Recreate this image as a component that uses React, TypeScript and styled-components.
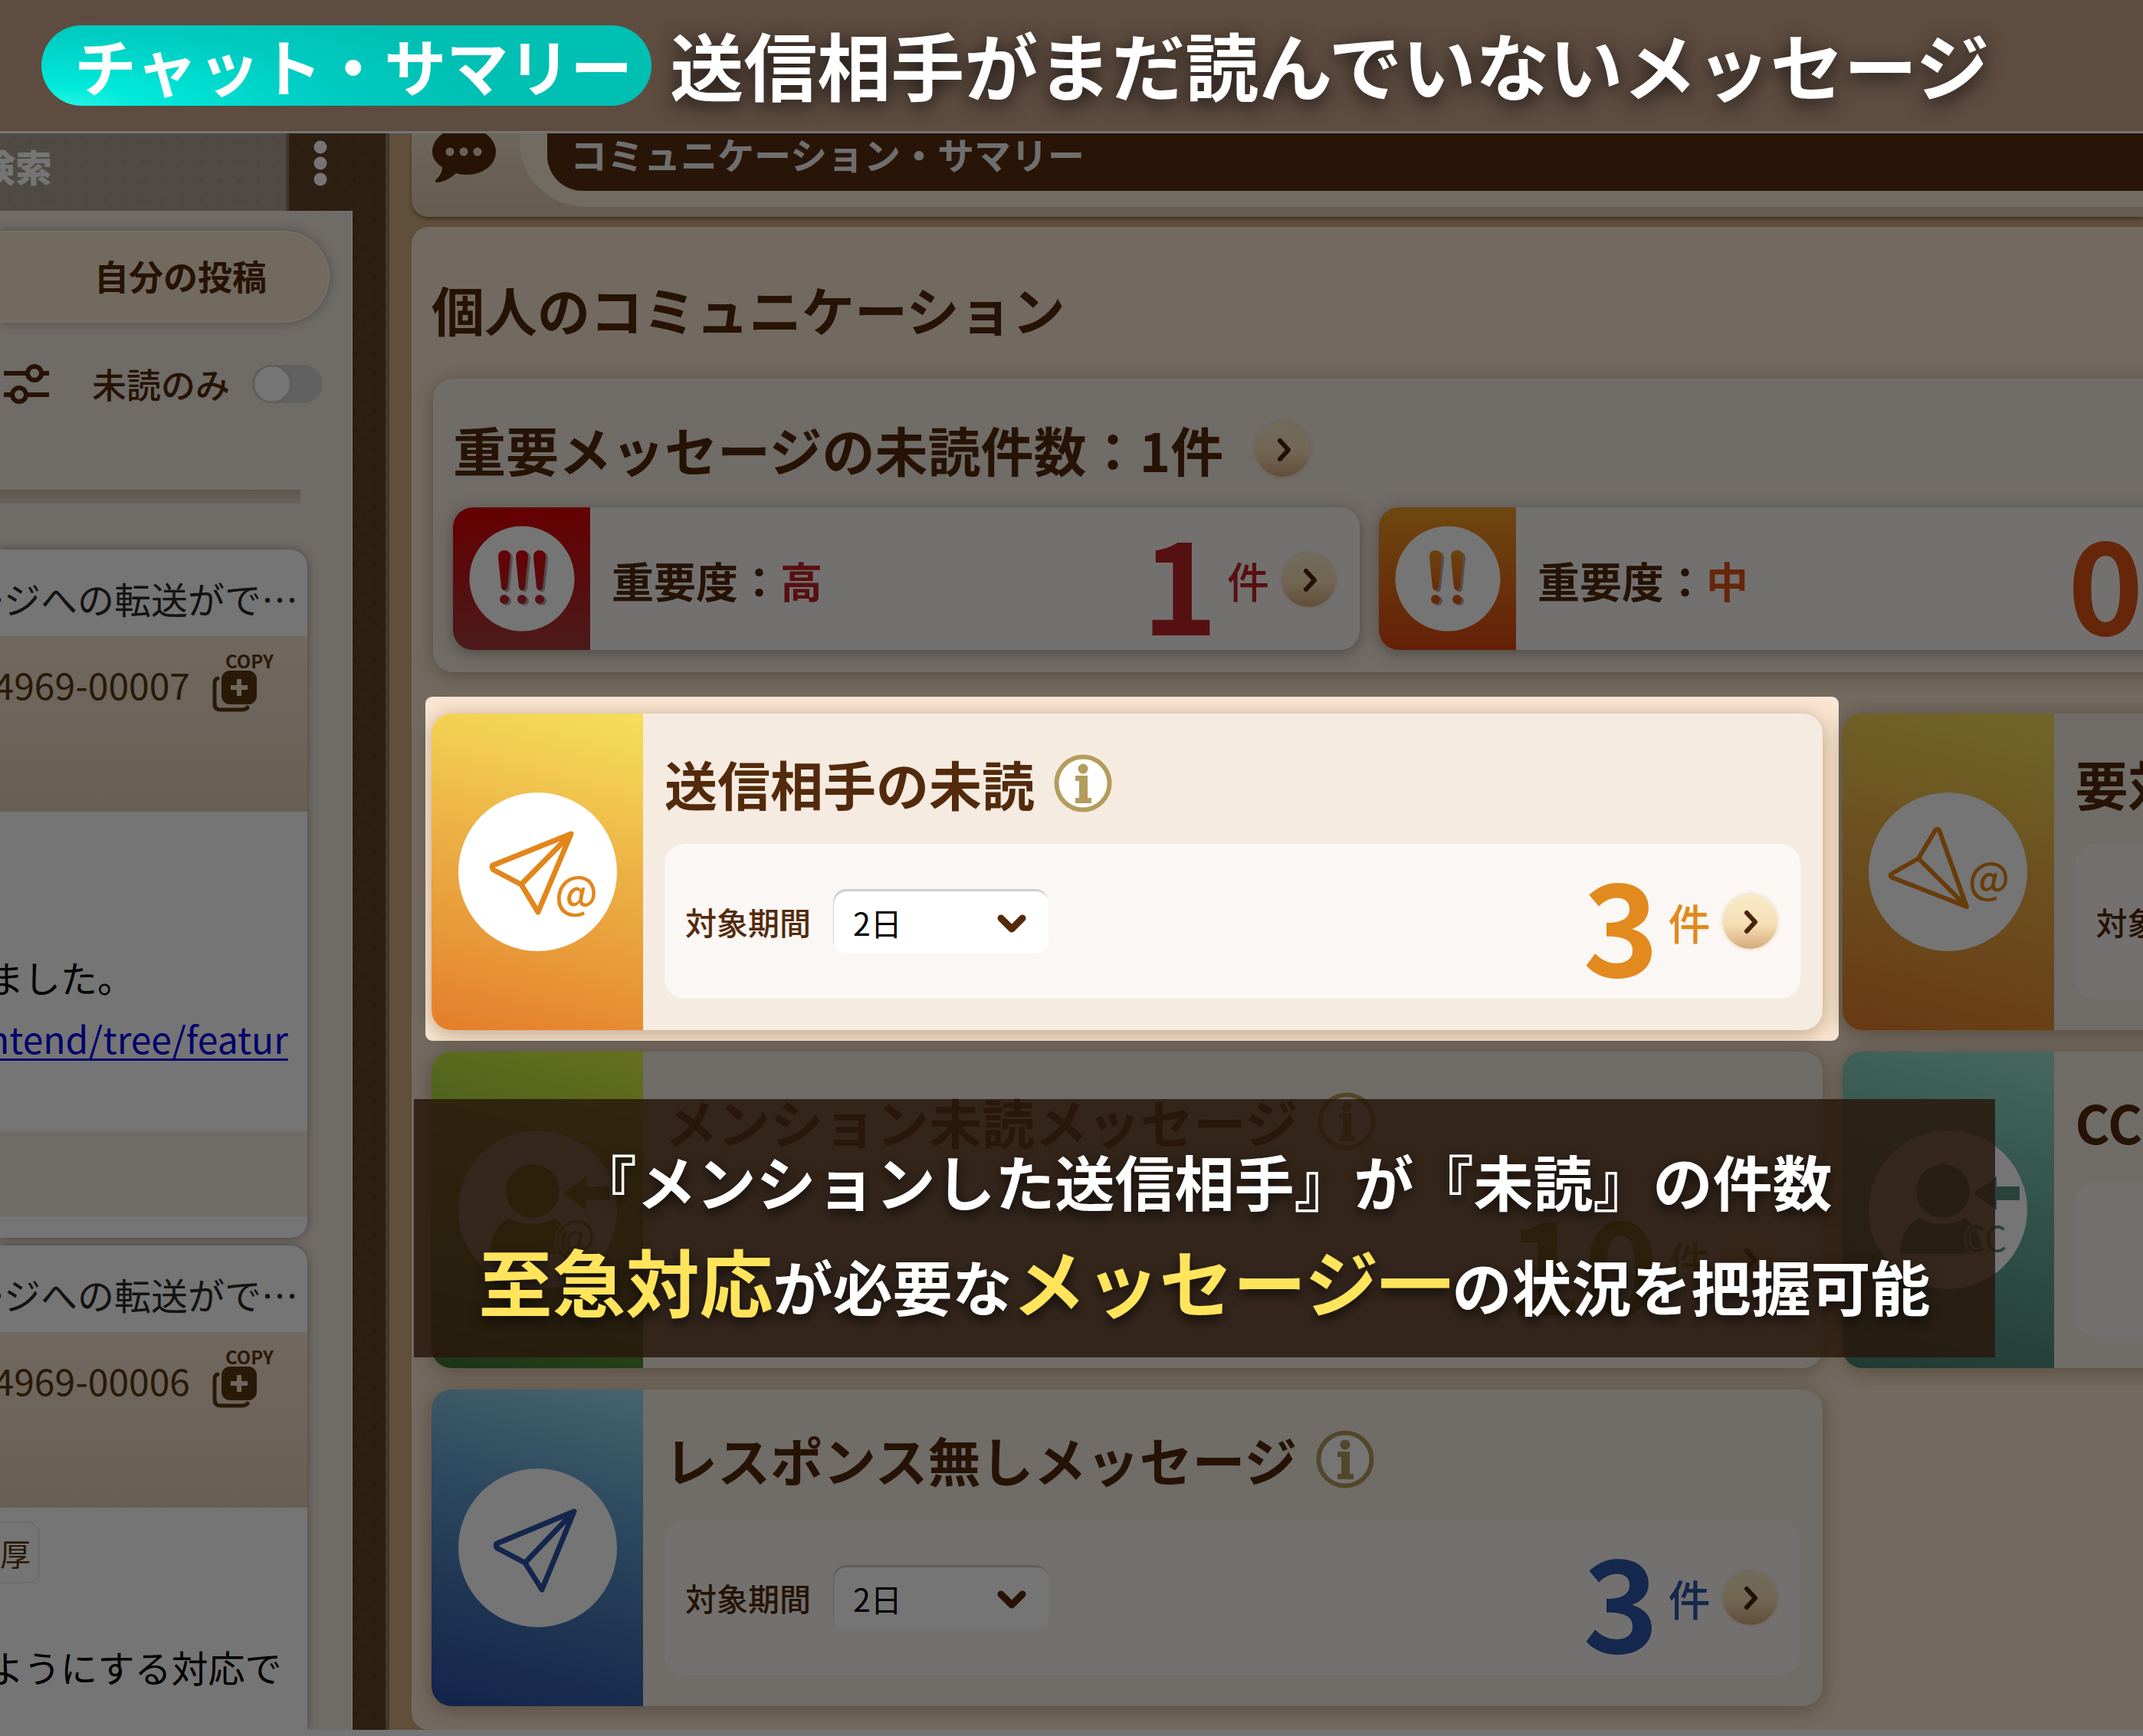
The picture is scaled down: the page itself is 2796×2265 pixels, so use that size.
import React, { useId } from "react";
import styled, { createGlobalStyle } from "styled-components";

const brown = "#532b0c";
const cream = "#f5ebe1";

const GlobalStyle = createGlobalStyle`
  *, *::before, *::after { box-sizing: border-box; }
  body {
    margin: 0;
    background: #757575;
    color: ${brown};
    font-family: "Noto Sans CJK JP", "Noto Sans", sans-serif;
    overflow-x: hidden;
  }
  h1, h2, h3, p { margin: 0; }
  button, select, input { font: inherit; color: inherit; margin: 0; }
  svg { display: block; flex: none; }
`;

/* ---------- page header ---------- */

const PageHeader = styled.header`
  display: flex;
  align-items: center;
  gap: 24px;
  height: 171px;
  padding: 0 54px;
  background: #5e4c40;
  color: #fff;
  white-space: nowrap;
`;

const TopicPill = styled.span`
  display: flex;
  align-items: center;
  height: 105px;
  padding: 0 25px 3px 43px;
  border-radius: 53px;
  background: radial-gradient(ellipse 70% 150% at 4% 104%, #2ff5e6 0%, #00eadb 18%, #00cdc3 60%, #00bfb3 100%);
  font-size: 81px;
  font-weight: 700;
  line-height: 102px;
`;

const PageTitle = styled.h1`
  padding-bottom: 6px;
  font-size: 96px;
  font-weight: 700;
  line-height: 120px;
  text-shadow: 0 6px 26px rgba(0, 0, 0, 0.75);
`;

/* ---------- stage ---------- */

const Stage = styled.div`
  position: relative;
  display: flex;
  overflow: hidden;
  padding: 3px 0 9px;
  background: #fff;
`;

/* ---------- left pane ---------- */

const LeftPane = styled.aside`
  flex: none;
  display: flex;
  flex-direction: column;
  width: 508px;
  border-right: 5px solid #8f7c68;
  overflow: hidden;
  background-color: #634528;
  background-image: radial-gradient(rgba(50, 28, 8, 0.2) 2px, transparent 4px),
    radial-gradient(rgba(50, 28, 8, 0.1) 2px, transparent 4px);
  background-size: 25px 25px;
  background-position: 0 0, 12px 12px;
`;

const TabBar = styled.div`
  display: flex;
  flex: none;
  height: 101px;
`;

const SearchTab = styled.button`
  width: 377px;
  padding: 0 0 18px;
  border: 0;
  border-right: 4px solid #8d7b6a;
  background-color: #aea295;
  background-image: radial-gradient(rgba(90, 70, 50, 0.1) 2px, transparent 4px);
  background-size: 25px 25px;
  color: #fff;
  font-size: 48px;
  font-weight: 900;
  line-height: 60px;
  text-align: left;
  text-indent: -28px;
`;

const MoreButton = styled.button`
  width: 84px;
  padding: 0 2px 23px 0;
  border: 0;
  background: none;
  display: flex;
  align-items: center;
  justify-content: center;
`;

const ListColumn = styled.div`
  flex: 1;
  display: flex;
  flex-direction: column;
  width: 460px;
  padding: 26px 28px 0 0;
  border-right: 2px solid #fff;
  background: #f2e9e1;
  min-height: 0;
`;

const FilterTabs = styled.button`
  display: flex;
  justify-content: flex-end;
  align-items: center;
  width: 100%;
  height: 120px;
  flex: none;
  padding: 0 80px 2px 0;
  border: 2px solid #fdf3e6;
  border-left: 0;
  border-radius: 0 60px 60px 0;
  background: #fae6d0;
  box-shadow: 0 0 14px rgba(90, 80, 70, 0.45);
  font-size: 45px;
  font-weight: 700;
  line-height: 60px;
`;

const FilterRow = styled.div`
  display: flex;
  align-items: center;
  height: 60px;
  flex: none;
  margin-top: 50px;
  padding-left: 4px;
  font-size: 45px;
  font-weight: 500;
  line-height: 60px;

  label { margin: 0 29px 0 54px; white-space: nowrap; }
`;

const Toggle = styled.input`
  appearance: none;
  flex: none;
  width: 92px;
  height: 50px;
  border-radius: 25px;
  background: radial-gradient(circle at 26px 25px, #fff 22px, #c3c3c3 24px, #d3d3d3 26px);
`;

const Divider = styled.div`
  flex: none;
  height: 18px;
  margin: 108px 38px 60px 0;
  background: linear-gradient(#cfb9a4, #e4d8ce);
`;

const MessageCard = styled.article<{ $fill?: boolean }>`
  flex: ${(p) => (p.$fill ? "1 0 auto" : "none")};
  display: flex;
  flex-direction: column;
  margin: 0 29px 0 0;
  margin-bottom: ${(p) => (p.$fill ? "0" : "10px")};
  border-radius: ${(p) => (p.$fill ? "0 22px 0 0" : "0 22px 22px 0")};
  background: #fff;
  box-shadow: 0 0 12px rgba(100, 80, 60, 0.55);
  overflow: hidden;
`;

const MessageTitle = styled.h3`
  display: flex;
  justify-content: flex-end;
  align-items: center;
  height: 113px;
  padding: 12px 12px 0 0;
  color: #2b2b2b;
  font-size: 48px;
  font-weight: 400;
  line-height: 60px;
  white-space: nowrap;
`;

const MessageMeta = styled.div`
  display: flex;
  justify-content: flex-end;
  align-items: flex-start;
  gap: 29px;
  height: 229px;
  padding: 21px 44px 0 0;
  background: linear-gradient(#f6e4d2, #e3d0b8);
  color: #5b3911;
  font-size: 48px;
  line-height: 60px;
  white-space: nowrap;

  > span { margin-top: 11px; }
`;

const CopyButton = styled.button`
  display: flex;
  flex: none;
  flex-direction: column;
  align-items: flex-start;
  gap: 2px;
  width: 80px;
  padding: 0;
  border: 0;
  background: none;
  color: #5b3911;
  font-size: 24px;
  font-weight: 700;
  line-height: 21px;

  span { align-self: flex-end; }
`;

const MessageBody = styled.div<{ $top: number }>`
  margin-left: -17px;
  padding-top: ${(p) => p.$top}px;
  color: #000;
  font-size: 48px;
  line-height: 80px;
  white-space: nowrap;

  a { color: #0000ee; text-underline-offset: 6px; text-decoration-thickness: 3px; }
`;

const MessageFooter = styled.div`
  height: 111px;
  margin: 82px 0 28px;
  background: #f2e9e1;
`;

const TagLine = styled.div`
  padding-top: 18px;
`;

const Tag = styled.span`
  display: inline-flex;
  align-items: center;
  height: 81px;
  padding: 0 10px 0 0;
  border: 2px solid #ececec;
  border-left: 0;
  border-radius: 0 16px 16px 0;
  color: #5b3911;
  font-size: 40px;
  line-height: 60px;
`;

/* ---------- main pane ---------- */

const Main = styled.main`
  flex: 1;
  min-width: 0;
  padding-left: 29px;
  background: #cfac80;
`;

const AppBar = styled.div`
  display: flex;
  height: 109px;
  padding-left: 26px;
  border-radius: 0 0 0 22px;
  background: linear-gradient(#f0dfc9, #ddc6ab);
  box-shadow: 0 3px 4px rgba(90, 60, 30, 0.5);
`;

const AppBarTrack = styled.div`
  flex: 1;
  height: 96px;
  margin-left: 29px;
  padding-left: 36px;
  border-radius: 0 0 0 86px;
  background: #f9e9d5;
`;

const AppBarTitle = styled.h2`
  display: flex;
  align-items: center;
  height: 75px;
  padding: 0 0 23px 30px;
  border-radius: 0 0 0 46px;
  background: #572e12;
  color: #f2f2f2;
  font-size: 48px;
  font-weight: 700;
  line-height: 52px;
`;

const Board = styled.section`
  width: calc(100% + 1448px);
  margin-top: 13px;
  padding: 71px 26px 31px;
  border-radius: 22px;
  background: #f9e6d2;
`;

const Heading = styled.h2`
  color: ${brown};
  font-size: 69px;
  font-weight: 700;
  line-height: 72px;
  white-space: nowrap;
`;

const HeadingRow = styled.div<{ $gap: number }>`
  display: flex;
  align-items: center;
  gap: ${(p) => p.$gap}px;
  height: 76px;
`;

const ImportantPanel = styled.section`
  margin: 55px 2px 54px;
  padding: 54px 26px 29px;
  border-radius: 26px;
  background: ${cream};
  box-shadow: 0 4px 24px rgba(120, 84, 50, 0.45);
`;

const PriorityGrid = styled.div`
  display: grid;
  grid-template-columns: repeat(3, 1fr);
  gap: 25px;
  margin-top: 38px;
`;

const PriorityCard = styled.article`
  display: flex;
  height: 186px;
  border-radius: 26px;
  overflow: hidden;
  background: #fbf7f4;
  box-shadow: 0 4px 20px rgba(100, 84, 70, 0.5);
`;

const PriorityBadge = styled.div<{ $fill: string }>`
  display: grid;
  place-items: center;
  flex: none;
  width: 179px;
  background: ${(p) => p.$fill};
`;

const PriorityText = styled.div`
  flex: 1;
  display: flex;
  align-items: center;
  justify-content: space-between;
  padding: 2px 31px 0 28px;
  font-size: 55px;
  font-weight: 700;
  line-height: 72px;
`;

const Accent = styled.span<{ $color: string }>`
  color: ${(p) => p.$color};
`;

const CountRow = styled.div<{ $color: string }>`
  display: flex;
  align-items: center;
  gap: 16px;
  color: ${(p) => p.$color};
`;

const CountNumber = styled.strong`
  margin-right: -4px;
  font-size: 168px;
  font-weight: 700;
  line-height: 180px;
`;

const CountUnit = styled.span`
  font-size: 55px;
  font-weight: 500;
  line-height: 72px;
`;

const RoundButton = styled.button`
  display: grid;
  place-items: center;
  flex: none;
  width: 71px;
  height: 71px;
  padding: 0;
  border: 0;
  border-radius: 50%;
  background: linear-gradient(#f8ebca, #f6dfb3 55%, #d6a97c);
  box-shadow: 0 0 5px rgba(220, 190, 140, 0.8);
  color: #4a230b;
`;

const CardGrid = styled.div`
  display: grid;
  grid-template-columns: repeat(2, 1fr);
  gap: 28px 26px;
`;

const SummaryCardBox = styled.article`
  position: relative;
  display: flex;
  height: 413px;
  border-radius: 26px;
  background: ${cream};
  box-shadow: 0 4px 26px rgba(120, 80, 40, 0.45);
`;

/* Dims everything around the card it is placed in. */
const Spotlight = styled.div`
  position: absolute;
  inset: -22px -21px -14px -8px;
  z-index: 1;
  border-radius: 9px;
  box-shadow: 0 0 0 4000px rgba(0, 0, 0, 0.54);
  pointer-events: none;
`;

const CardBadge = styled.div<{ $fill: string }>`
  display: grid;
  place-items: center;
  flex: none;
  width: 276px;
  border-radius: 26px 0 0 26px;
  background: ${(p) => p.$fill};
`;

const CardBody = styled.div`
  flex: 1;
  display: flex;
  flex-direction: column;
  padding: 53px 29px 41px 28px;
`;

const PeriodPanel = styled.div`
  flex: 1;
  display: flex;
  align-items: center;
  margin-top: 41px;
  padding: 0 30px 0 27px;
  border-radius: 26px;
  background: #fbf7f4;

  > label {
    margin-right: 29px;
    font-size: 41px;
    font-weight: 500;
    line-height: 60px;
    white-space: nowrap;
  }
  > div:last-child { margin-left: auto; }
`;

const SelectBox = styled.span`
  display: grid;
  align-items: center;
  width: 281px;
  height: 84px;

  > * { grid-area: 1 / 1; }
  > svg { justify-self: end; margin: 8px 28px 0 0; pointer-events: none; }
`;

const Select = styled.select`
  appearance: none;
  width: 100%;
  height: 100%;
  padding: 2px 80px 0 26px;
  border: 0;
  border-radius: 17px;
  background: #fff;
  box-shadow: inset 1px 3px 1px #cfcfcf;
  color: #000;
  font-size: 41px;
  line-height: 60px;
`;

/* ---------- caption ---------- */

const Caption = styled.div`
  position: absolute;
  z-index: 2;
  left: 540px;
  right: 193px;
  top: 1263px;
  padding: 42px 0 29px;
  background: rgba(41, 24, 12, 0.84);
  color: #fff;
  font-size: 78px;
  font-weight: 700;
  line-height: 129px;
  text-align: center;
  text-shadow: 0 6px 16px rgba(0, 0, 0, 0.7);
  white-space: nowrap;

  em { color: #ffe45c; font-size: 96px; font-style: normal; }
`;

/* ---------- icons ---------- */

const font = '"Noto Sans CJK JP", sans-serif';

const ChevronRight = () => (
  <svg width="36" height="36" viewBox="0 0 36 36" fill="none" stroke="currentColor" strokeWidth="6" strokeLinecap="round" strokeLinejoin="round">
    <path d="M14 7 25 19 14 31" />
  </svg>
);

const ChevronDown = () => (
  <svg width="40" height="30" viewBox="0 0 40 30" fill="none" stroke="#55290b" strokeWidth="9" strokeLinecap="round" strokeLinejoin="round">
    <path d="M6 7 20 21 34 7" />
  </svg>
);

const InfoIcon = () => (
  <svg width="76" height="76" viewBox="0 0 76 76">
    <circle cx="38" cy="38" r="34.5" fill="#fff" stroke="#b39c5c" strokeWidth="6" />
    <circle cx="38" cy="19" r="6.5" fill="#b39c5c" />
    <path d="M28 28H44V57H49V64H28V57H33V35H28Z" fill="#b39c5c" />
  </svg>
);

const Kebab = () => (
  <svg width="20" height="62" viewBox="0 0 20 62" fill="#fff">
    <circle cx="10" cy="10" r="8.5" />
    <circle cx="10" cy="31" r="8.5" />
    <circle cx="10" cy="52" r="8.5" />
  </svg>
);

const SlidersIcon = () => (
  <svg width="62" height="54" viewBox="0 0 62 54" fill="none" stroke={brown} strokeWidth="6">
    <path d="M1 13H32M50 13H60M1 41H12M30 41H60" />
    <circle cx="41" cy="13" r="9" />
    <circle cx="21" cy="41" r="9" />
  </svg>
);

const CopyIcon = () => (
  <svg width="60" height="56" viewBox="0 0 60 56">
    <path d="M7 11Q3 12 3 18V44Q3 52 11 52H38Q44 52 46 49" fill="none" stroke="#5b3911" strokeWidth="5" strokeLinecap="round" />
    <rect x="12" y="1" width="46" height="44" rx="11" fill="#5b3911" />
    <path d="M35 12V34M24 23H46" stroke="#f2e0cc" strokeWidth="6" />
  </svg>
);

const ChatIcon = () => (
  <svg width="86" height="109" viewBox="0 0 86 109">
    <path d="M43 -8C65 -8 84 6 84 24S66 54 46 54C40 54 36 53 32 52C25 59 14 64 7 64C5 64 4 62 6 60C11 56 14 50 14 44C6 39 1 32 1 24C1 6 20 -8 43 -8Z" fill={brown} />
    <circle cx="24" cy="24" r="5.5" fill="#e8d7c3" />
    <circle cx="42" cy="24" r="5.5" fill="#e8d7c3" />
    <circle cx="60" cy="24" r="5.5" fill="#e8d7c3" />
  </svg>
);

const MarksIcon = ({ xs, from, to }: { xs: number[]; from: string; to: string }) => {
  const id = useId();
  return (
    <svg width="138" height="138" viewBox="0 0 138 138">
      <defs>
        <linearGradient id={id} gradientUnits="userSpaceOnUse" x1="0" y1="30" x2="0" y2="104">
          <stop offset="0" stopColor={from} />
          <stop offset="1" stopColor={to} />
        </linearGradient>
      </defs>
      <circle cx="69" cy="69" r="68.5" fill="#fff" />
      {xs.map((x) => (
        <g key={x}>
          <g fill="#b5aba6" transform="translate(3 2)">
            <path d={`M${x - 8} 41Q${x - 8} 32 ${x} 32T${x + 8} 41L${x + 4} 81Q${x} 88 ${x - 4} 81Z`} />
            <circle cx={x} cy="96" r="6" />
          </g>
          <g fill={`url(#${id})`}>
            <path d={`M${x - 8} 41Q${x - 8} 32 ${x} 32T${x + 8} 41L${x + 4} 81Q${x} 88 ${x - 4} 81Z`} />
            <circle cx={x} cy="96" r="6" />
          </g>
        </g>
      ))}
    </svg>
  );
};

const Disc = ({ children }: { children: React.ReactNode }) => (
  <svg width="207" height="207" viewBox="0 0 207 207">
    <circle cx="103.5" cy="103.5" r="103.5" fill="#fff" />
    {children}
  </svg>
);

type GlyphProps = { x: number; y: number; color: string; children: string; size?: number; weight?: number };

const Glyph = ({ x, y, color, children, size = 58, weight = 500 }: GlyphProps) => (
  <text x={x} y={y} textAnchor="middle" fontFamily={font} fontSize={size} fontWeight={weight} fill={color} stroke="#fff" strokeWidth="4" paintOrder="stroke">
    {children}
  </text>
);

const SentIcon = () => (
  <Disc>
    <path d="M147 54 45 95Q43 98 46 101L82 120 104 156ZM82 120 147 54" fill="none" stroke="#e2861b" strokeWidth="7" strokeLinejoin="round" />
    <Glyph x={154} y={152} color="#e2861b">@</Glyph>
  </Disc>
);

const ActionIcon = () => (
  <Disc>
    <path d="M92 49Q88 46 86 51L65 86 30 106Q27 109 31 111L128 149ZM65 86 128 149" fill="none" stroke="#e2861b" strokeWidth="6" strokeLinejoin="round" />
    <Glyph x={157} y={132} color="#e2861b" size={56}>@</Glyph>
  </Disc>
);

const NoResponseIcon = () => (
  <Disc>
    <path d="M151 56 50 98Q48 101 51 104L87 123 109 158ZM87 123 151 56" fill="none" stroke="#2d54a8" strokeWidth="7" strokeLinejoin="round" />
  </Disc>
);

const PersonIcon = ({ color, mark }: { color: string; mark: string }) => (
  <Disc>
    <g fill={color}>
      <circle cx="97" cy="79" r="35" />
      <path d="M66 114Q80 122 96 122T126 114Q142 126 148 150V161H46Q38 161 42 150Q46 124 66 114Z" />
      <path d="M137 82 167 60V73H197V91H167V104Z" />
    </g>
    <Glyph x={152} y={mark === "@" ? 159 : 158} color={color} size={mark === "@" ? 58 : 45} weight={400}>{mark}</Glyph>
  </Disc>
);

/* ---------- composed parts ---------- */

const Arrow = ({ label }: { label: string }) => (
  <RoundButton type="button" aria-label={label}>
    <ChevronRight />
  </RoundButton>
);

const Count = ({ value, color, label }: { value: number; color: string; label: string }) => (
  <CountRow $color={color}>
    <CountNumber>{value}</CountNumber>
    <CountUnit>件</CountUnit>
    <Arrow label={label} />
  </CountRow>
);

type SummaryProps = {
  title: string;
  fill: string;
  icon: React.ReactNode;
  info?: boolean;
  spotlight?: boolean;
  period?: boolean;
  count?: number;
  color?: string;
};

const SummaryCard = ({ title, fill, icon, info, spotlight, period, count, color = brown }: SummaryProps) => {
  const id = useId();
  return (
    <SummaryCardBox>
      <CardBadge $fill={fill}>{icon}</CardBadge>
      <CardBody>
        <HeadingRow $gap={25}>
          <Heading as="h3">{title}</Heading>
          {info && <InfoIcon />}
        </HeadingRow>
        <PeriodPanel>
          {period && (
            <>
              <label htmlFor={id}>対象期間</label>
              <SelectBox>
                <Select id={id} defaultValue="2">
                  <option value="2">2日</option>
                </Select>
                <ChevronDown />
              </SelectBox>
            </>
          )}
          {count !== undefined && <Count value={count} color={color} label={title} />}
        </PeriodPanel>
      </CardBody>
      {spotlight && <Spotlight />}
    </SummaryCardBox>
  );
};

const PriorityItem = ({ level, color, fill, value, icon }: { level: string; color: string; fill: string; value: number; icon: React.ReactNode }) => (
  <PriorityCard>
    <PriorityBadge $fill={fill}>{icon}</PriorityBadge>
    <PriorityText>
      <span>
        重要度：<Accent $color={color}>{level}</Accent>
      </span>
      <Count value={value} color={color} label={`重要度 ${level}`} />
    </PriorityText>
  </PriorityCard>
);

const MessageHead = ({ number }: { number: string }) => (
  <>
    <MessageTitle>ージへの転送がで…</MessageTitle>
    <MessageMeta>
      <span>{number}</span>
      <CopyButton type="button">
        <span>COPY</span>
        <CopyIcon />
      </CopyButton>
    </MessageMeta>
  </>
);

const amber = "linear-gradient(15deg, #e47c2a, #e79637 25%, #ecb045 55%, #f2cc50 80%, #f6de5a)";
const green = "linear-gradient(15deg, #3c7030, #5f9a38 25%, #94bc3c 55%, #bde040 80%, #dcf540)";
const blue = "linear-gradient(15deg, #2a4ea4, #4272b4 30%, #64a2d2 65%, #84c2e2 85%, #9cdaf8)";
const teal = "linear-gradient(15deg, #487f70, #5ea28f 35%, #76bda9 65%, #88d0bc 82%, #9ce0d0)";

export default function App() {
  return (
    <>
      <GlobalStyle />
      <PageHeader>
        <TopicPill>チャット・サマリー</TopicPill>
        <PageTitle>送信相手がまだ読んでいないメッセージ</PageTitle>
      </PageHeader>

      <Stage>
        <LeftPane>
          <TabBar>
            <SearchTab type="button">検索</SearchTab>
            <MoreButton type="button" aria-label="メニュー">
              <Kebab />
            </MoreButton>
          </TabBar>
          <ListColumn>
            <FilterTabs type="button">自分の投稿</FilterTabs>
            <FilterRow>
              <SlidersIcon />
              <label htmlFor="unread-only">未読のみ</label>
              <Toggle id="unread-only" type="checkbox" role="switch" />
            </FilterRow>
            <Divider />
            <MessageCard>
              <MessageHead number="4969-00007" />
              <MessageBody $top={175}>
                <p>ました。</p>
                <p>
                  <a href="#branch">ntend/tree/featur</a>
                </p>
              </MessageBody>
              <MessageFooter />
            </MessageCard>
            <MessageCard $fill>
              <MessageHead number="4969-00006" />
              <TagLine>
                <Tag>厚</Tag>
              </TagLine>
              <MessageBody $top={68}>
                <p>ようにする対応で</p>
              </MessageBody>
            </MessageCard>
          </ListColumn>
        </LeftPane>

        <Main>
          <AppBar>
            <ChatIcon />
            <AppBarTrack>
              <AppBarTitle>コミュニケーション・サマリー</AppBarTitle>
            </AppBarTrack>
          </AppBar>
          <Board>
            <Heading>個人のコミュニケーション</Heading>
            <ImportantPanel>
              <HeadingRow $gap={42}>
                <Heading as="h3">重要メッセージの未読件数：1件</Heading>
                <Arrow label="重要メッセージ" />
              </HeadingRow>
              <PriorityGrid>
                <PriorityItem
                  level="高"
                  color="#be2329"
                  fill="linear-gradient(#dc0004, #a53a3a)"
                  value={1}
                  icon={<MarksIcon xs={[46, 69, 92]} from="#dc0408" to="#b42a30" />}
                />
                <PriorityItem
                  level="中"
                  color="#de5316"
                  fill="linear-gradient(#f09c22, #dc4612)"
                  value={0}
                  icon={<MarksIcon xs={[53, 81]} from="#ee9420" to="#de5316" />}
                />
              </PriorityGrid>
            </ImportantPanel>
            <CardGrid>
              <SummaryCard title="送信相手の未読" fill={amber} icon={<SentIcon />} info spotlight period count={3} color="#e28a1e" />
              <SummaryCard title="要対" fill={amber} icon={<ActionIcon />} period />
              <SummaryCard title="メンション未読メッセージ" fill={green} icon={<PersonIcon color="#86a51c" mark="@" />} info count={10} color="#86a01c" />
              <SummaryCard title="CC" fill={teal} icon={<PersonIcon color="#5a9382" mark="CC" />} />
              <SummaryCard title="レスポンス無しメッセージ" fill={blue} icon={<NoResponseIcon />} info period count={3} color="#2f58a8" />
            </CardGrid>
          </Board>
        </Main>

        <Caption>
          <p>『メンションした送信相手』が『未読』の件数</p>
          <p>
            <em>至急対応</em>が必要な<em>メッセージ一</em>の状況を把握可能
          </p>
        </Caption>
      </Stage>
    </>
  );
}
